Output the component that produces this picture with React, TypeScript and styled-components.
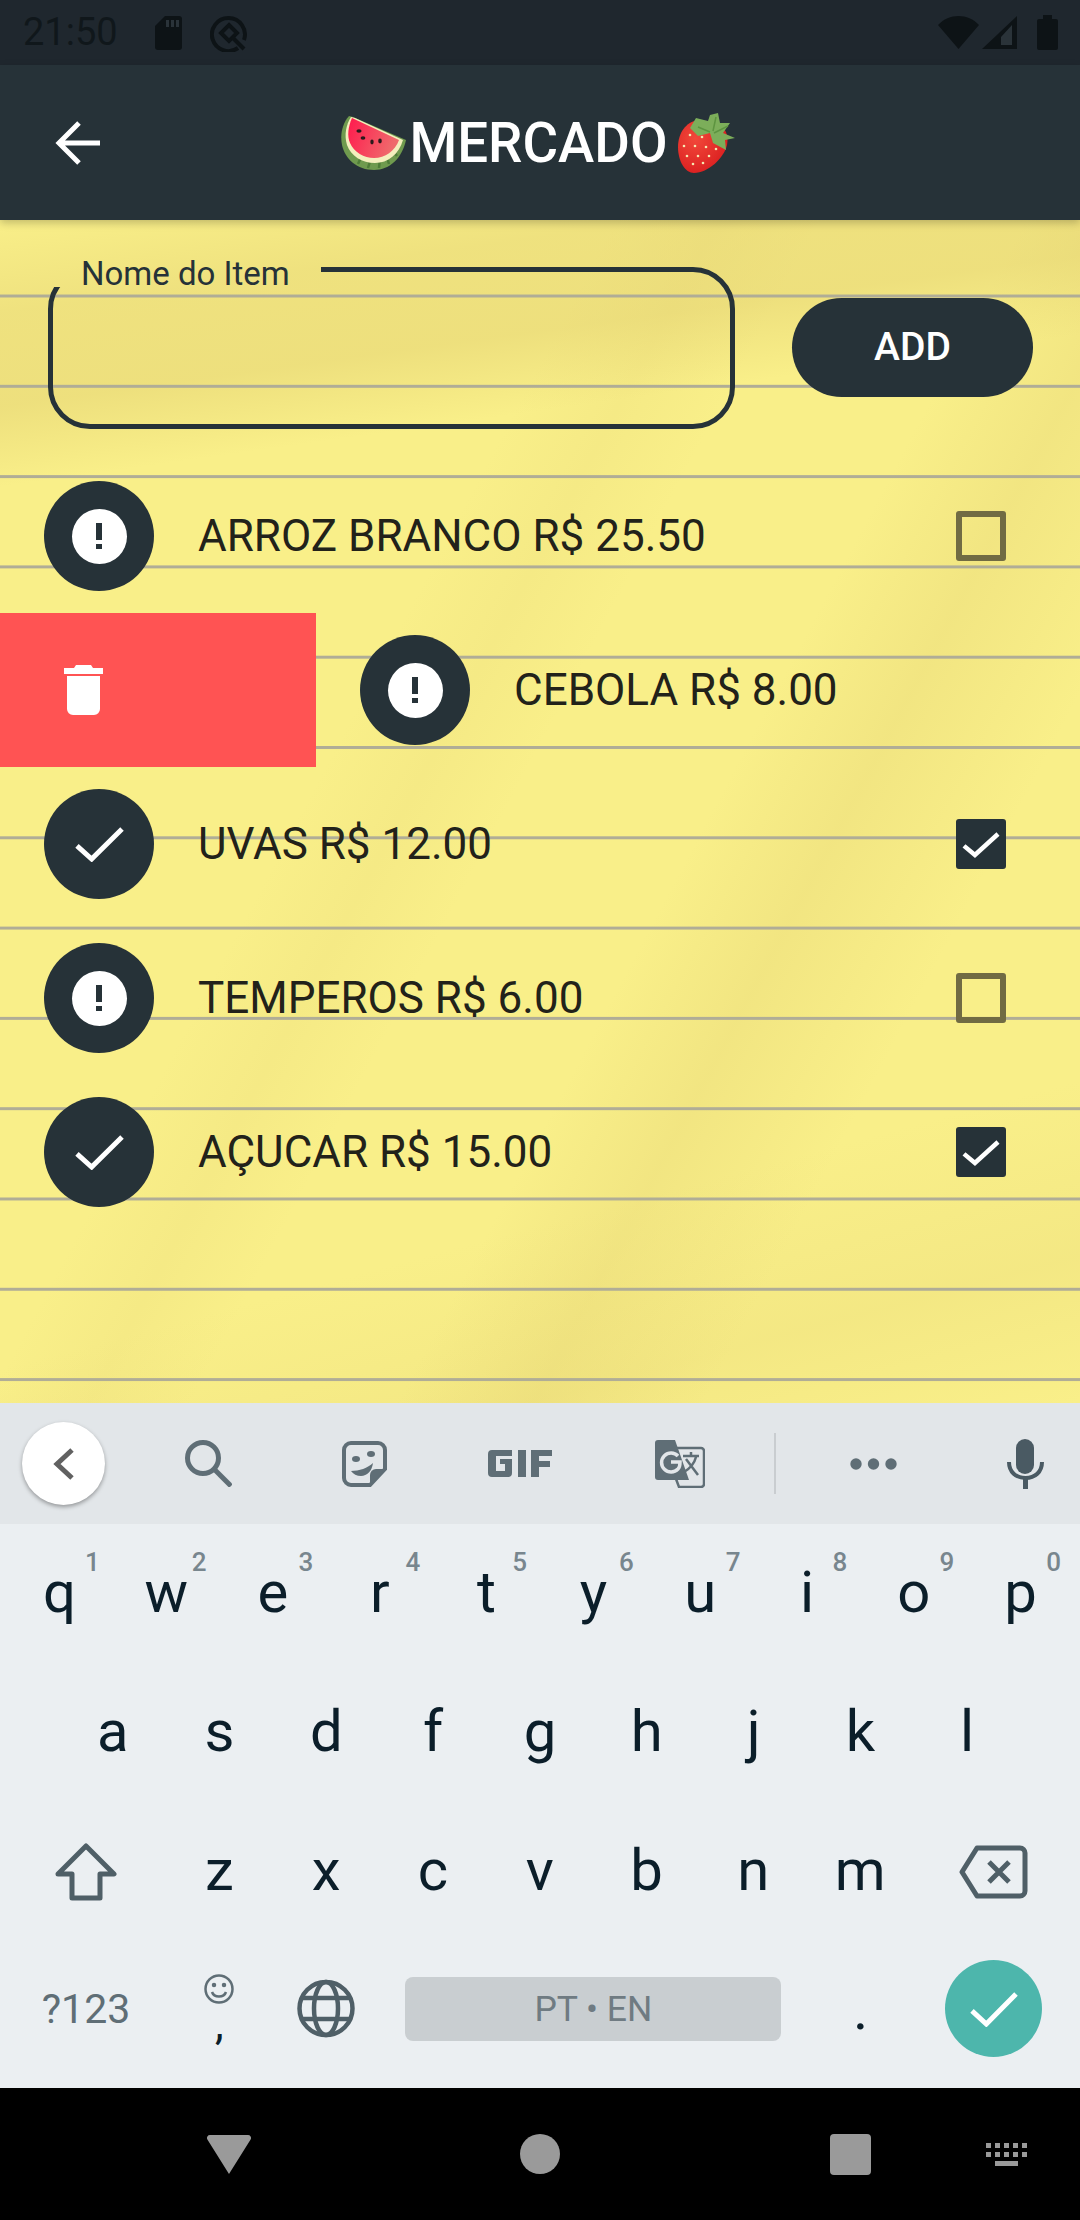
import React from "react";
import styled, { createGlobalStyle } from "styled-components";

const GlobalStyle = createGlobalStyle`
  html, body {
    margin: 0;
    padding: 0;
    background: #000;
  }
  * {
    box-sizing: border-box;
  }
`;

const Screen = styled.div`
  width: 1080px;
  height: 2220px;
  display: flex;
  flex-direction: column;
  overflow: hidden;
  font-family: Roboto, "Liberation Sans", sans-serif;
`;

const StatusBar = styled.div`
  height: 65px;
  flex-shrink: 0;
  display: flex;
  align-items: center;
  justify-content: space-between;
  padding: 0 22px 0 23px;
  background: #1f272e;
  color: #10171b;
`;

const StatusGroup = styled.div`
  display: flex;
  align-items: center;
`;

const Clock = styled.span`
  font-size: 38px;
  line-height: 65px;
  width: 132px;
`;

const Header = styled.header`
  position: relative;
  z-index: 2;
  height: 155px;
  flex-shrink: 0;
  display: grid;
  grid-template-columns: 1fr auto 1fr;
  align-items: center;
  padding: 0 0 0 55px;
  background: #263238;
  box-shadow: 0 3px 8px rgba(0, 0, 0, 0.22);
`;

const Title = styled.h1`
  margin: 0 59px 0 0;
  display: flex;
  align-items: center;
  font-size: 54.6px;
  font-weight: 500;
  color: #fff;
`;

const Paper = styled.main`
  flex: 1;
  padding-top: 31px;
  background-color: #f9ef89;
  background-image:
    linear-gradient(transparent 87.3px, #b0ad96 87.3px, #b0ad96 90.3px),
    linear-gradient(172deg, rgba(225, 207, 112, 0) 0, rgba(225, 207, 112, 0.42) 7%, rgba(225, 207, 112, 0.48) 14%, rgba(225, 207, 112, 0) 20%),
    linear-gradient(118deg, rgba(225, 207, 112, 0) 36%, rgba(225, 207, 112, 0.16) 42%, rgba(225, 207, 112, 0) 48%),
    linear-gradient(118deg, rgba(225, 207, 112, 0) 60%, rgba(225, 207, 112, 0.3) 68%, rgba(225, 207, 112, 0) 78%),
    linear-gradient(165deg, rgba(225, 207, 112, 0) 78%, rgba(225, 207, 112, 0.22) 90%, rgba(225, 207, 112, 0) 100%);
  background-size: 100% 90.3px, 100% 100%, 100% 100%, 100% 100%, 100% 100%;
  background-position: 0 -12.8px, 0 0, 0 0, 0 0, 0 0;
  background-repeat: repeat-y, no-repeat, no-repeat, no-repeat, no-repeat;
`;

const FormRow = styled.form`
  display: flex;
  align-items: center;
  gap: 57px;
  padding-left: 48px;
  margin-bottom: 30px;
`;

const ItemField = styled.fieldset`
  width: 687px;
  height: 178px;
  margin: 0;
  padding: 0;
  border: 5px solid #263238;
  border-radius: 42px;
`;

const ItemLabel = styled.legend`
  height: 36px;
  padding: 0 31px 0 28px;
  font-size: 33px;
  line-height: 46px;
  color: #263238;
`;

const AddButton = styled.button`
  width: 241px;
  height: 99px;
  margin-top: 14px;
  padding: 0;
  border: none;
  border-radius: 50px;
  background: #263238;
  color: #fff;
  font-family: inherit;
  font-size: 39px;
  font-weight: 500;
`;

const ItemRow = styled.div`
  display: flex;
  height: 154px;
  overflow: hidden;
`;

const DeleteAction = styled.div`
  flex: 0 0 316px;
  display: flex;
  align-items: center;
  padding-left: 64px;
  background: #ff5353;
`;

const ItemBody = styled.div`
  flex: 0 0 1080px;
  display: flex;
  align-items: center;
  padding: 0 74px 0 44px;
`;

const StateBadge = styled.div`
  width: 110px;
  height: 110px;
  flex-shrink: 0;
  display: flex;
  align-items: center;
  justify-content: center;
  border-radius: 50%;
  background: #263238;
`;

const AlertDot = styled.div`
  width: 55px;
  height: 55px;
  display: flex;
  flex-direction: column;
  align-items: center;
  justify-content: center;
  gap: 4px;
  border-radius: 50%;
  background: #fff;

  &::before {
    content: "";
    width: 5.5px;
    height: 17px;
    background: #263238;
  }
  &::after {
    content: "";
    width: 5.5px;
    height: 5.5px;
    background: #263238;
  }
`;

const ItemText = styled.span`
  margin-left: 44px;
  font-size: 44px;
  color: #22221a;
  white-space: nowrap;
`;

const CheckBox = styled.div<{ $checked: boolean }>`
  width: 50px;
  height: 50px;
  margin-left: auto;
  display: flex;
  align-items: center;
  justify-content: center;
  border-radius: 3px;
  border: 6px solid ${(p) => (p.$checked ? "#263238" : "#716b43")};
  background: ${(p) => (p.$checked ? "#263238" : "transparent")};
`;

const Keyboard = styled.section`
  height: 685px;
  flex-shrink: 0;
  background: #ebeff2;
`;

const Toolbar = styled.div`
  height: 121px;
  display: flex;
  align-items: center;
  background: #e2e6e9;
`;

const ToolSlot = styled.div<{ $w: number; $pr?: number }>`
  width: ${(p) => p.$w}px;
  display: flex;
  align-items: center;
  justify-content: ${(p) => (p.$pr ? "flex-end" : "center")};
  padding-right: ${(p) => p.$pr ?? 0}px;
`;

const BackCircle = styled.div`
  width: 83px;
  height: 83px;
  display: flex;
  align-items: center;
  justify-content: center;
  border-radius: 50%;
  background: #fff;
  box-shadow: 0 2px 4px rgba(0, 0, 0, 0.35);
`;

const Divider = styled.div`
  width: 2px;
  height: 61px;
  background: #c9cdd0;
`;

const KeyArea = styled.div`
  padding: 0 6px;
`;

const KeyRow = styled.div<{ $h?: number; $indent?: boolean }>`
  display: flex;
  height: ${(p) => p.$h ?? 139}px;
  padding-left: ${(p) => (p.$indent ? 53.4 : 0)}px;
`;

const Key = styled.div<{ $w?: number }>`
  position: relative;
  flex: 0 0 ${(p) => p.$w ?? 106.8}px;
  display: flex;
  align-items: center;
  justify-content: center;
  font-size: 58px;
  color: #0b1e2a;
`;

const Letter = styled.span`
  padding-bottom: 4px;
`;

const Hint = styled.span`
  position: absolute;
  top: 23px;
  right: 13px;
  font-size: 26px;
  font-weight: 500;
  color: #78868e;
`;

const SymbolsLabel = styled.span`
  font-size: 41px;
  color: #5f6e76;
`;

const CommaStack = styled.div`
  display: flex;
  flex-direction: column;
  align-items: center;
  font-size: 44px;
  line-height: 40px;
`;

const SpaceBar = styled.div`
  width: 376px;
  height: 64px;
  display: flex;
  align-items: center;
  justify-content: center;
  border-radius: 8px;
  background: #c9ced1;
  color: #6f7b82;
  font-size: 35.5px;
`;

const EnterButton = styled.div`
  width: 97px;
  height: 97px;
  display: flex;
  align-items: center;
  justify-content: center;
  border-radius: 50%;
  background: #4db6ac;
`;

const NavBar = styled.nav`
  height: 132px;
  flex-shrink: 0;
  display: flex;
  align-items: center;
  background: #000;
`;

const NavSlot = styled.div<{ $w: number; $ml?: number }>`
  width: ${(p) => p.$w}px;
  margin-left: ${(p) => p.$ml ?? 0}px;
  display: flex;
  justify-content: center;
`;

const NavCircle = styled.div`
  width: 40px;
  height: 40px;
  border-radius: 50%;
  background: #9a9a9a;
`;

const NavSquare = styled.div`
  width: 41px;
  height: 41px;
  border-radius: 4px;
  background: #9a9a9a;
`;

const Watermelon = () => (
  <svg width="65" height="54" viewBox="0 0 65 54" style={{ marginRight: 3 }}>
    <path d="M8 0C1 8-1 19 1 29c3 14 15 25 32 25 16 0 28-12 32-30L12 1z" fill="#6f9a4e" />
    <path d="M17 48l5-11M27 52l3-10M38 52l1-10M48 48l-3-10M56 40l-5-7" stroke="#4f7d38" strokeWidth="2.5" />
    <path d="M10 1C5 9 3 19 6 29c4 11 15 18 28 18 13 0 24-9 28-23L14 2z" fill="#f4efbd" />
    <defs>
      <linearGradient id="flesh" x1="0" y1="0" x2="1" y2="0.3">
        <stop offset="0" stopColor="#ff1a4d" />
        <stop offset="1" stopColor="#ef6a6c" />
      </linearGradient>
    </defs>
    <path d="M11 2C7 11 6 20 9 27c4 9 14 15 24 15 11 0 21-7 25-18z" fill="url(#flesh)" />
    <g fill="#2a1a1c">
      <ellipse cx="18" cy="15" rx="2.6" ry="1.8" />
      <ellipse cx="22" cy="22" rx="2.4" ry="1.8" />
      <ellipse cx="31" cy="26" rx="1.7" ry="2.4" />
      <ellipse cx="39" cy="25" rx="1.8" ry="2.4" />
    </g>
  </svg>
);

const Strawberry = () => (
  <svg width="57" height="60" viewBox="0 0 57 60" style={{ marginLeft: 10 }}>
    <defs>
      <radialGradient id="berry" cx="0.35" cy="0.35" r="0.8">
        <stop offset="0" stopColor="#f2483a" />
        <stop offset="1" stopColor="#d7191c" />
      </radialGradient>
    </defs>
    <path d="M20 7C8 9 0 20 0 34c0 14 7 26 16 26 14 0 30-15 33-28 2-10-2-18-9-21z" fill="url(#berry)" />
    <g fill="#f6e7b0">
      {[[12, 22], [24, 24], [6, 33], [17, 33], [28, 34], [38, 36], [9, 43], [20, 43], [31, 43], [15, 51], [25, 50]].map(([x, y]) => (
        <circle key={`${x}-${y}`} cx={x} cy={y} r="1.3" />
      ))}
    </g>
    <path d="M12 15l6-10 12 3 2-6 8-2 2 10 10 0-7 10 12 5-10 2 1 10-13-7-3-10-12 3z" fill="#7cae5a" />
    <path d="M20 14l12 5M38 4l-3 14M50 13l-14 7" stroke="#5d9440" strokeWidth="1.5" fill="none" />
  </svg>
);

const SdCardIcon = () => (
  <svg width="27" height="34" viewBox="0 0 27 34" fill="#0d1316">
    <path d="M10 0h14a3 3 0 0 1 3 3v28a3 3 0 0 1-3 3H3a3 3 0 0 1-3-3V10z" />
    <path d="M11 4h3v7h-3zM16 4h3v7h-3zM21 4h3v7h-3z" fill="#2a3339" />
  </svg>
);

const QIcon = () => (
  <svg width="38" height="38" viewBox="0 0 38 38" fill="none" stroke="#0d1316" style={{ marginLeft: 28 }}>
    <path d="M28 34A16.5 16.5 0 1 1 34 26" strokeWidth="4" />
    <path d="M19 11l8 8-8 8-8-8z" strokeWidth="4" />
    <path d="M22 23l12 12" strokeWidth="4" />
  </svg>
);

const WifiIcon = () => (
  <svg width="41" height="33" viewBox="0 0 41 33" fill="#0d1316">
    <path d="M0 9C11-3 30-3 41 9L20.500 33z" />
  </svg>
);

const SignalIcon = () => (
  <svg width="35" height="33" viewBox="0 0 35 33" style={{ marginLeft: 3, marginRight: 20 }}>
    <path d="M0 33L35 0v33z" fill="#0d1316" />
    <path d="M19 21l11-12v20H19z" fill="#2a3339" />
  </svg>
);

const BatteryIcon = () => (
  <svg width="21" height="35" viewBox="0 0 21 35" fill="#0d1316">
    <path d="M6 0h9v4h4a2 2 0 0 1 2 2v27a2 2 0 0 1-2 2H2a2 2 0 0 1-2-2V6a2 2 0 0 1 2-2h4z" />
  </svg>
);

const BackArrow = () => (
  <svg width="45" height="44" viewBox="0 0 45 44" fill="none" stroke="#fff" strokeWidth="5">
    <path d="M45 22H4M24 2L4 22l20 20" />
  </svg>
);

const Check = ({ w, h, sw }: { w: number; h: number; sw: number }) => (
  <svg width={w} height={h} viewBox={`0 0 ${w} ${h}`} fill="none" stroke="#fff" strokeWidth={sw}>
    <path d={`M2 ${h * 0.55}L${w * 0.34} ${h - 3}L${w - 2} 3`} />
  </svg>
);

const TrashIcon = () => (
  <svg width="39" height="50" viewBox="0 0 39 50" fill="#fff">
    <path d="M0 3h10l2-3h15l2 3h10v6H0zM3 11h33v33a6 6 0 0 1-6 6H9a6 6 0 0 1-6-6z" />
  </svg>
);

const Chevron = () => (
  <svg width="22" height="32" viewBox="0 0 22 32" fill="none" stroke="#616161" strokeWidth="5">
    <path d="M19 2L4 16l15 14" />
  </svg>
);

const SearchIcon = () => (
  <svg width="47" height="47" viewBox="0 0 47 47" fill="none" stroke="#5f6e76" strokeWidth="5">
    <circle cx="18" cy="18" r="15.500" />
    <path d="M29 29l17 17" />
  </svg>
);

const StickerIcon = () => (
  <svg width="45" height="46" viewBox="0 0 45 46" fill="none">
    <path d="M9 2h27a7 7 0 0 1 7 7v19L28 44H9a7 7 0 0 1-7-7V9a7 7 0 0 1 7-7z" stroke="#5f6e76" strokeWidth="4" />
    <path d="M43 28H34a6 6 0 0 0-6 6v10z" fill="#5f6e76" />
    <path d="M9 30c8 0 17-3 22-8-1 8-6 13-12 13-4 0-8-2-10-5z" fill="#5f6e76" />
    <ellipse cx="14" cy="18" rx="4" ry="3" fill="#5f6e76" />
    <ellipse cx="29" cy="13" rx="4" ry="3" fill="#5f6e76" />
  </svg>
);

const GifIcon = () => (
  <svg width="64" height="27" viewBox="0 0 64 27" fill="#5f6e76">
    <path d="M4 0h20v6H8v15h9v-7h-5V9h12v14a4 4 0 0 1-4 4H4a4 4 0 0 1-4-4V4a4 4 0 0 1 4-4z" />
    <path d="M30 0h8v27h-8z" />
    <path d="M43 0h21v6H51v5h11v6H51v10h-8z" />
  </svg>
);

const TranslateIcon = () => (
  <svg width="50" height="48" viewBox="0 0 50 48" fill="none">
    <path d="M20 8h26a3 3 0 0 1 3 3v33a3 3 0 0 1-3 3H24l-3-8z" fill="#e2e6e9" stroke="#5f6e76" strokeWidth="2.500" />
    <path d="M3 0h17l14 40H3a3 3 0 0 1-3-3V3a3 3 0 0 1 3-3z" fill="#5f6e76" />
    <path d="M23 16a9.500 9.500 0 1 0 0 13c2-2 2-5 2-7H16" stroke="#e2e6e9" strokeWidth="3.500" />
    <path d="M28 16h16M36 12v4M41 17c-2 8-7 12-12 15M31 19l12 16" stroke="#5f6e76" strokeWidth="2.500" />
  </svg>
);

const DotsIcon = () => (
  <svg width="47" height="12" viewBox="0 0 47 12" fill="#5f6e76">
    <circle cx="6" cy="6" r="5.700" />
    <circle cx="23.500" cy="6" r="5.700" />
    <circle cx="41" cy="6" r="5.700" />
  </svg>
);

const MicIcon = () => (
  <svg width="37" height="50" viewBox="0 0 37 50" fill="none">
    <rect x="9" y="0" width="18" height="35" rx="9" fill="#4a5a63" />
    <path d="M2 23c0 10 7 16 16.500 16S35 33 35 23" stroke="#4a5a63" strokeWidth="4" />
    <path d="M18.500 38v12" stroke="#4a5a63" strokeWidth="5" />
  </svg>
);

const ShiftIcon = () => (
  <svg width="62" height="58" viewBox="0 0 62 58" fill="none" stroke="#4f5f67" strokeWidth="5" strokeLinejoin="round">
    <path d="M31 3L59 31H45V55H17V31H3z" />
  </svg>
);

const BackspaceIcon = () => (
  <svg width="69" height="54" viewBox="0 0 69 54" fill="none" stroke="#4f5f67" strokeWidth="5">
    <path d="M18 3h43a5 5 0 0 1 5 5v38a5 5 0 0 1-5 5H18L3 27z" strokeLinejoin="round" />
    <path d="M30 17l20 20M50 17L30 37" />
  </svg>
);

const SmileIcon = () => (
  <svg width="30" height="30" viewBox="0 0 30 30" fill="none" stroke="#5f6e76" strokeWidth="2.500">
    <circle cx="15" cy="15" r="13.500" />
    <circle cx="10" cy="11" r="1" fill="#5f6e76" />
    <circle cx="20" cy="11" r="1" fill="#5f6e76" />
    <path d="M8 18c2 6 12 6 14 0" />
  </svg>
);

const GlobeIcon = () => (
  <svg width="58" height="59" viewBox="0 0 58 59" fill="none" stroke="#4f5f67" strokeWidth="4.500">
    <circle cx="29" cy="29.500" r="26.500" />
    <ellipse cx="29" cy="29.500" rx="12" ry="26.500" />
    <path d="M5 19h48M5 40h48" />
  </svg>
);

const NavBack = () => (
  <svg width="44" height="39" viewBox="0 0 44 39" fill="#9a9a9a">
    <path d="M3 0h38a3 3 0 0 1 2.600 4.500L22 39 .400 4.500A3 3 0 0 1 3 0z" />
  </svg>
);

const KeyboardSwitch = () => (
  <svg width="42" height="23" viewBox="0 0 42 23" fill="#9a9a9a">
    {[0, 9, 18, 27, 36].map((x) => (
      <g key={x}>
        <rect x={x} y="0" width="5" height="5" />
        <rect x={x} y="9" width="5" height="5" />
      </g>
    ))}
    <rect x="9" y="18" width="23" height="5" />
  </svg>
);

const items = [
  { name: "ARROZ BRANCO R$ 25.50", bought: false },
  { name: "CEBOLA R$ 8.00", bought: false, swiped: true },
  { name: "UVAS R$ 12.00", bought: true },
  { name: "TEMPEROS R$ 6.00", bought: false },
  { name: "AÇUCAR R$ 15.00", bought: true },
];

const topRow = ["q", "w", "e", "r", "t", "y", "u", "i", "o", "p"];
const homeRow = ["a", "s", "d", "f", "g", "h", "j", "k", "l"];
const bottomRow = ["z", "x", "c", "v", "b", "n", "m"];

export default function App() {
  return (
    <Screen>
      <GlobalStyle />
      <StatusBar>
        <StatusGroup>
          <Clock>21:50</Clock>
          <SdCardIcon />
          <QIcon />
        </StatusGroup>
        <StatusGroup>
          <WifiIcon />
          <SignalIcon />
          <BatteryIcon />
        </StatusGroup>
      </StatusBar>

      <Header>
        <BackArrow />
        <Title>
          <Watermelon />
          MERCADO
          <Strawberry />
        </Title>
      </Header>

      <Paper>
        <FormRow>
          <ItemField>
            <ItemLabel>Nome do Item</ItemLabel>
          </ItemField>
          <AddButton type="button">ADD</AddButton>
        </FormRow>

        {items.map((item) => (
          <ItemRow key={item.name}>
            {item.swiped && (
              <DeleteAction>
                <TrashIcon />
              </DeleteAction>
            )}
            <ItemBody>
              <StateBadge>
                {item.bought ? <Check w={49} h={36} sw={5} /> : <AlertDot />}
              </StateBadge>
              <ItemText>{item.name}</ItemText>
              <CheckBox $checked={item.bought}>
                {item.bought && <Check w={38} h={27} sw={4.5} />}
              </CheckBox>
            </ItemBody>
          </ItemRow>
        ))}
      </Paper>

      <Keyboard>
        <Toolbar>
          <ToolSlot $w={127}>
            <BackCircle>
              <Chevron />
            </BackCircle>
          </ToolSlot>
          <ToolSlot $w={162}>
            <SearchIcon />
          </ToolSlot>
          <ToolSlot $w={150}>
            <StickerIcon />
          </ToolSlot>
          <ToolSlot $w={162}>
            <GifIcon />
          </ToolSlot>
          <ToolSlot $w={158}>
            <TranslateIcon />
          </ToolSlot>
          <ToolSlot $w={32}>
            <Divider />
          </ToolSlot>
          <ToolSlot $w={164}>
            <DotsIcon />
          </ToolSlot>
          <ToolSlot $w={125} $pr={36}>
            <MicIcon />
          </ToolSlot>
        </Toolbar>

        <KeyArea>
          <KeyRow>
            {topRow.map((letter, i) => (
              <Key key={letter}>
                <Letter>{letter}</Letter>
                <Hint>{(i + 1) % 10}</Hint>
              </Key>
            ))}
          </KeyRow>
          <KeyRow $indent>
            {homeRow.map((letter) => (
              <Key key={letter}>
                <Letter>{letter}</Letter>
              </Key>
            ))}
          </KeyRow>
          <KeyRow>
            <Key $w={160}>
              <ShiftIcon />
            </Key>
            {bottomRow.map((letter) => (
              <Key key={letter}>
                <Letter>{letter}</Letter>
              </Key>
            ))}
            <Key $w={160}>
              <BackspaceIcon />
            </Key>
          </KeyRow>
          <KeyRow $h={135}>
            <Key $w={160}>
              <SymbolsLabel>?123</SymbolsLabel>
            </Key>
            <Key>
              <CommaStack>
                <SmileIcon />
                ,
              </CommaStack>
            </Key>
            <Key>
              <GlobeIcon />
            </Key>
            <Key $w={427.6}>
              <SpaceBar>PT • EN</SpaceBar>
            </Key>
            <Key>.</Key>
            <Key $w={160}>
              <EnterButton>
                <Check w={48} h={36} sw={5} />
              </EnterButton>
            </Key>
          </KeyRow>
        </KeyArea>
      </Keyboard>

      <NavBar>
        <NavSlot $w={458}>
          <NavBack />
        </NavSlot>
        <NavSlot $w={164}>
          <NavCircle />
        </NavSlot>
        <NavSlot $w={41} $ml={208}>
          <NavSquare />
        </NavSlot>
        <NavSlot $w={42} $ml={115}>
          <KeyboardSwitch />
        </NavSlot>
      </NavBar>
    </Screen>
  );
}
